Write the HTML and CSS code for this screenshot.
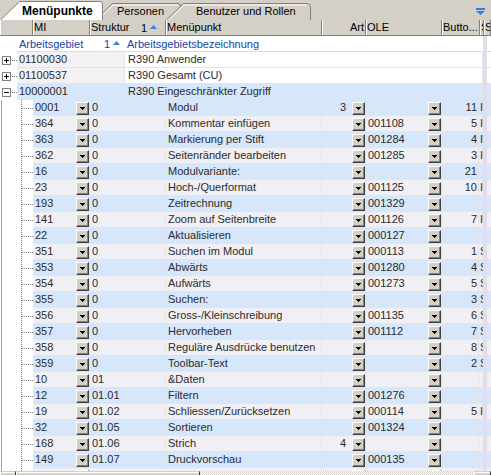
FILE: index.html
```html
<!DOCTYPE html>
<html>
<head>
<meta charset="utf-8">
<link rel="stylesheet" href="styles.css">
</head>
<body>
<div class="app">
  <div class="tabs">
    <div class="tab tab-1">Menüpunkte</div>
    <div class="tab tab-2">Personen</div>
    <div class="tab tab-3">Benutzer und Rollen</div>
    <svg class="filter" width="9" height="7" viewBox="0 0 9 7"><rect x="0" y="0" width="9" height="2" fill="#2f80dc"/><path d="M0 3 H9 L4.5 7 Z" fill="#2f80dc"/></svg>
  </div>
  <div class="hdr">
    <div class="hc"></div>
    <div class="hc">MI</div>
    <div class="hc hc-sort"><span>Struktur</span><span class="sortmark">1<svg width="7" height="4" viewBox="0 0 7 4"><path d="M0 4 L3.5 0 L7 4 Z" fill="#3a84dc"/></svg></span></div>
    <div class="hc">Menüpunkt</div>
    <div class="hc hc-right">Art</div>
    <div class="hc">OLE</div>
    <div class="hc">Butto...</div>
    <div class="hc hc-clip">S</div>
    <div class="hc hc-clip">S</div>
  </div>
  <div class="viewport">
    <div class="row top grp">
      <div class="ttree"></div>
      <div class="c gsort"><span>Arbeitsgebiet</span><span class="sortmark">1<svg width="7" height="4" viewBox="0 0 7 4"><path d="M0 4 L3.5 0 L7 4 Z" fill="#3a84dc"/></svg></span></div>
      <div class="c">Arbeitsgebietsbezeichnung</div>
      <div class="lav"></div>
      <div class="c end"></div>
    </div>
    <div class="row top">
      <div class="ttree"><span class="box"><svg width="7" height="7" viewBox="0 0 7 7"><path d="M1 3.5 H6 M3.5 1 V6" stroke="#000" stroke-width="1"/></svg></span><span class="hline"></span></div>
      <div class="c tmi">01100030</div>
      <div class="c tname">R390 Anwender</div>
      <div class="lav"></div>
      <div class="c end"></div>
    </div>
    <div class="row top">
      <div class="ttree"><span class="box"><svg width="7" height="7" viewBox="0 0 7 7"><path d="M1 3.5 H6 M3.5 1 V6" stroke="#000" stroke-width="1"/></svg></span><span class="hline"></span></div>
      <div class="c tmi">01100537</div>
      <div class="c tname">R390 Gesamt (CU)</div>
      <div class="lav"></div>
      <div class="c end"></div>
    </div>
    <div class="row top open">
      <div class="ttree"><span class="box"><svg width="7" height="7" viewBox="0 0 7 7"><path d="M1 3.5 H6" stroke="#000" stroke-width="1"/></svg></span><span class="hline"></span></div>
      <div class="c tmi">10000001</div>
      <div class="c tname">R390 Eingeschränkter Zugriff</div>
      <div class="lav"></div>
      <div class="c end"></div>
    </div>

    <div class="row child blue"><div class="tree"></div><div class="c mi"><span class="t">0001</span><i class="dd"></i></div><div class="c">0</div><div class="c">Modul</div><div class="c art"><span class="t">3</span><i class="dd"></i></div><div class="c ole"><span class="t"></span><i class="dd"></i></div><div class="c num">11</div><div class="c clip">I</div><div class="lav"></div><div class="c end"></div></div>
    <div class="row child gray"><div class="tree"></div><div class="c mi"><span class="t">364</span><i class="dd"></i></div><div class="c">0</div><div class="c">Kommentar einfügen</div><div class="c art"><span class="t"></span><i class="dd"></i></div><div class="c ole"><span class="t">001108</span><i class="dd"></i></div><div class="c num">5</div><div class="c clip">I</div><div class="lav"></div><div class="c end"></div></div>
    <div class="row child blue"><div class="tree"></div><div class="c mi"><span class="t">363</span><i class="dd"></i></div><div class="c">0</div><div class="c">Markierung per Stift</div><div class="c art"><span class="t"></span><i class="dd"></i></div><div class="c ole"><span class="t">001284</span><i class="dd"></i></div><div class="c num">4</div><div class="c clip">I</div><div class="lav"></div><div class="c end"></div></div>
    <div class="row child gray"><div class="tree"></div><div class="c mi"><span class="t">362</span><i class="dd"></i></div><div class="c">0</div><div class="c">Seitenränder bearbeiten</div><div class="c art"><span class="t"></span><i class="dd"></i></div><div class="c ole"><span class="t">001285</span><i class="dd"></i></div><div class="c num">3</div><div class="c clip">I</div><div class="lav"></div><div class="c end"></div></div>
    <div class="row child blue"><div class="tree"></div><div class="c mi"><span class="t">16</span><i class="dd"></i></div><div class="c">0</div><div class="c">Modulvariante:</div><div class="c art"><span class="t"></span><i class="dd"></i></div><div class="c ole"><span class="t"></span><i class="dd"></i></div><div class="c num">21</div><div class="c clip"></div><div class="lav"></div><div class="c end"></div></div>
    <div class="row child gray"><div class="tree"></div><div class="c mi"><span class="t">23</span><i class="dd"></i></div><div class="c">0</div><div class="c">Hoch-/Querformat</div><div class="c art"><span class="t"></span><i class="dd"></i></div><div class="c ole"><span class="t">001125</span><i class="dd"></i></div><div class="c num">10</div><div class="c clip">I</div><div class="lav"></div><div class="c end"></div></div>
    <div class="row child blue"><div class="tree"></div><div class="c mi"><span class="t">193</span><i class="dd"></i></div><div class="c">0</div><div class="c">Zeitrechnung</div><div class="c art"><span class="t"></span><i class="dd"></i></div><div class="c ole"><span class="t">001329</span><i class="dd"></i></div><div class="c num"></div><div class="c clip"></div><div class="lav"></div><div class="c end"></div></div>
    <div class="row child gray"><div class="tree"></div><div class="c mi"><span class="t">141</span><i class="dd"></i></div><div class="c">0</div><div class="c">Zoom auf Seitenbreite</div><div class="c art"><span class="t"></span><i class="dd"></i></div><div class="c ole"><span class="t">001126</span><i class="dd"></i></div><div class="c num">7</div><div class="c clip">I</div><div class="lav"></div><div class="c end"></div></div>
    <div class="row child blue"><div class="tree"></div><div class="c mi"><span class="t">22</span><i class="dd"></i></div><div class="c">0</div><div class="c">Aktualisieren</div><div class="c art"><span class="t"></span><i class="dd"></i></div><div class="c ole"><span class="t">000127</span><i class="dd"></i></div><div class="c num"></div><div class="c clip"></div><div class="lav"></div><div class="c end"></div></div>
    <div class="row child gray"><div class="tree"></div><div class="c mi"><span class="t">351</span><i class="dd"></i></div><div class="c">0</div><div class="c">Suchen im Modul</div><div class="c art"><span class="t"></span><i class="dd"></i></div><div class="c ole"><span class="t">000113</span><i class="dd"></i></div><div class="c num">1</div><div class="c clip">S</div><div class="lav"></div><div class="c end"></div></div>
    <div class="row child blue"><div class="tree"></div><div class="c mi"><span class="t">353</span><i class="dd"></i></div><div class="c">0</div><div class="c">Abwärts</div><div class="c art"><span class="t"></span><i class="dd"></i></div><div class="c ole"><span class="t">001280</span><i class="dd"></i></div><div class="c num">4</div><div class="c clip">S</div><div class="lav"></div><div class="c end"></div></div>
    <div class="row child gray"><div class="tree"></div><div class="c mi"><span class="t">354</span><i class="dd"></i></div><div class="c">0</div><div class="c">Aufwärts</div><div class="c art"><span class="t"></span><i class="dd"></i></div><div class="c ole"><span class="t">001273</span><i class="dd"></i></div><div class="c num">5</div><div class="c clip">S</div><div class="lav"></div><div class="c end"></div></div>
    <div class="row child blue"><div class="tree"></div><div class="c mi"><span class="t">355</span><i class="dd"></i></div><div class="c">0</div><div class="c">Suchen:</div><div class="c art"><span class="t"></span><i class="dd"></i></div><div class="c ole"><span class="t"></span><i class="dd"></i></div><div class="c num">3</div><div class="c clip">S</div><div class="lav"></div><div class="c end"></div></div>
    <div class="row child gray"><div class="tree"></div><div class="c mi"><span class="t">356</span><i class="dd"></i></div><div class="c">0</div><div class="c">Gross-/Kleinschreibung</div><div class="c art"><span class="t"></span><i class="dd"></i></div><div class="c ole"><span class="t">001135</span><i class="dd"></i></div><div class="c num">6</div><div class="c clip">S</div><div class="lav"></div><div class="c end"></div></div>
    <div class="row child blue"><div class="tree"></div><div class="c mi"><span class="t">357</span><i class="dd"></i></div><div class="c">0</div><div class="c">Hervorheben</div><div class="c art"><span class="t"></span><i class="dd"></i></div><div class="c ole"><span class="t">001112</span><i class="dd"></i></div><div class="c num">7</div><div class="c clip">S</div><div class="lav"></div><div class="c end"></div></div>
    <div class="row child gray"><div class="tree"></div><div class="c mi"><span class="t">358</span><i class="dd"></i></div><div class="c">0</div><div class="c">Reguläre Ausdrücke benutzen</div><div class="c art"><span class="t"></span><i class="dd"></i></div><div class="c ole"><span class="t"></span><i class="dd"></i></div><div class="c num">8</div><div class="c clip">S</div><div class="lav"></div><div class="c end"></div></div>
    <div class="row child blue"><div class="tree"></div><div class="c mi"><span class="t">359</span><i class="dd"></i></div><div class="c">0</div><div class="c">Toolbar-Text</div><div class="c art"><span class="t"></span><i class="dd"></i></div><div class="c ole"><span class="t"></span><i class="dd"></i></div><div class="c num">2</div><div class="c clip">S</div><div class="lav"></div><div class="c end"></div></div>
    <div class="row child gray"><div class="tree"></div><div class="c mi"><span class="t">10</span><i class="dd"></i></div><div class="c">01</div><div class="c">&amp;Daten</div><div class="c art"><span class="t"></span><i class="dd"></i></div><div class="c ole"><span class="t"></span><i class="dd"></i></div><div class="c num"></div><div class="c clip"></div><div class="lav"></div><div class="c end"></div></div>
    <div class="row child blue"><div class="tree"></div><div class="c mi"><span class="t">12</span><i class="dd"></i></div><div class="c">01.01</div><div class="c">Filtern</div><div class="c art"><span class="t"></span><i class="dd"></i></div><div class="c ole"><span class="t">001276</span><i class="dd"></i></div><div class="c num"></div><div class="c clip"></div><div class="lav"></div><div class="c end"></div></div>
    <div class="row child gray"><div class="tree"></div><div class="c mi"><span class="t">19</span><i class="dd"></i></div><div class="c">01.02</div><div class="c">Schliessen/Zurücksetzen</div><div class="c art"><span class="t"></span><i class="dd"></i></div><div class="c ole"><span class="t">000114</span><i class="dd"></i></div><div class="c num">5</div><div class="c clip">I</div><div class="lav"></div><div class="c end"></div></div>
    <div class="row child blue"><div class="tree"></div><div class="c mi"><span class="t">32</span><i class="dd"></i></div><div class="c">01.05</div><div class="c">Sortieren</div><div class="c art"><span class="t"></span><i class="dd"></i></div><div class="c ole"><span class="t">001324</span><i class="dd"></i></div><div class="c num"></div><div class="c clip"></div><div class="lav"></div><div class="c end"></div></div>
    <div class="row child gray"><div class="tree"></div><div class="c mi"><span class="t">168</span><i class="dd"></i></div><div class="c">01.06</div><div class="c">Strich</div><div class="c art"><span class="t">4</span><i class="dd"></i></div><div class="c ole"><span class="t"></span><i class="dd"></i></div><div class="c num"></div><div class="c clip"></div><div class="lav"></div><div class="c end"></div></div>
    <div class="row child blue"><div class="tree"></div><div class="c mi"><span class="t">149</span><i class="dd"></i></div><div class="c">01.07</div><div class="c">Druckvorschau</div><div class="c art"><span class="t"></span><i class="dd"></i></div><div class="c ole"><span class="t">000135</span><i class="dd"></i></div><div class="c num"></div><div class="c clip"></div><div class="lav"></div><div class="c end"></div></div>
    <div class="row child gray"><div class="tree"></div><div class="c mi"><span class="t"></span><i class="dd"></i></div><div class="c"></div><div class="c"></div><div class="c art"><span class="t"></span><i class="dd"></i></div><div class="c ole"><span class="t"></span><i class="dd"></i></div><div class="c num"></div><div class="c clip"></div><div class="lav"></div><div class="c end"></div></div>
  </div>
  <div class="hscroll">
    <div class="sb-btn"></div>
    <div class="sb-thumb"></div>
    <div class="sb-track"></div>
    <div class="sb-btn sb-right"></div>
  </div>
</div>
</body>
</html>
```

FILE: styles.css
```css
* {
  box-sizing: border-box;
  margin: 0;
  padding: 0;
}

html, body {
  width: 491px;
  height: 475px;
  overflow: hidden;
  background: #fff;
}

body {
  font-family: "Liberation Sans", Arial, sans-serif;
  font-size: 11px;
  color: #000;
}

.app {
  width: 491px;
  height: 488px;
  display: flex;
  flex-direction: column;
}

/* ---------- tab strip ---------- */
.tabs {
  height: 20px;
  flex: none;
  display: flex;
  align-items: flex-start;
  background: url("data:image/svg+xml,<svg xmlns='http://www.w3.org/2000/svg' width='491' height='20'><rect width='491' height='20' fill='%23d4d0c8'/><path d='M95.5 20 L112.5 3.5 H178 Q180.5 3.5 180.5 6 V20' fill='%23d4d0c8' stroke='%23808080'/><path d='M97.5 20 L113 5 H178' fill='none' stroke='%23ffffff'/><path d='M166.5 20 L183.5 3.5 H307 Q310.5 3.5 310.5 7 V20' fill='%23d4d0c8' stroke='%23808080'/><path d='M168.5 20 L184 5 H307' fill='none' stroke='%23ffffff'/><path d='M0.5 20 L19.5 1.5 H100 Q102.5 1.5 102.5 4 V20' fill='%23ffffff' stroke='%23808080'/></svg>") no-repeat;
}

.tab {
  height: 20px;
  line-height: 20px;
  padding-top: 1px;
  white-space: nowrap;
  flex: none;
}

.tab-1 {
  width: 102px;
  padding-left: 22px;
  font-weight: bold;
  font-size: 12px;
}

.tab-2 {
  width: 68px;
  padding-left: 15px;
}

.tab-3 {
  width: 140px;
  padding-left: 26px;
}

.filter {
  margin-left: auto;
  margin-right: 6px;
  margin-top: 8px;
  flex: none;
}

/* ---------- column header ---------- */
.hdr {
  height: 16px;
  flex: none;
  display: grid;
  grid-template-columns: 33px 57px 76px 156px 44px 76px 38px 4px 7px;
  background: #d4d0c8;
  border-bottom: 1px solid #808080;
}

.hc {
  border-right: 1px solid #808080;
  box-shadow: inset 1px 0 #fff;
  padding-left: 1px;
  line-height: 14px;
  white-space: nowrap;
  overflow: hidden;
}

.hc-right {
  text-align: right;
  padding-right: 1px;
}

.hc-clip {
  padding-left: 1px;
}

.hc-sort {
  display: flex;
  justify-content: space-between;
  padding-right: 8px;
}

.sortmark {
  display: flex;
  align-items: center;
  gap: 3px;
}

.sortmark svg {
  display: block;
  margin-top: -1px;
}

/* ---------- rows ---------- */
.viewport {
  flex: 1;
  overflow: hidden;
  display: flex;
  flex-direction: column;
}

.row {
  display: grid;
  height: 16px;
  flex: none;
}

.top {
  grid-template-columns: 17px 108px 358px 4px 4px;
}

.child {
  grid-template-columns: 33px 57px 76px 156px 44px 76px 37px 4px 4px 4px;
}

.c {
  height: 16px;
  line-height: 15px;
  border-bottom: 1px solid #e3e3e9;
  border-right: 1px solid #e3e3e9;
  white-space: nowrap;
  overflow: hidden;
  padding-left: 2px;
  color: #2c2c2c;
}

.lav {
  background: #e3dcec;
}

.end {
  border-right: none;
  padding: 0;
}

/* group-by row */
.grp .c {
  color: #15459f;
  line-height: 16px;
  border-bottom-color: #dcdcdc;
  border-right-color: transparent;
}

.gsort {
  display: flex;
  justify-content: space-between;
  padding-right: 4px;
}

/* top level rows */
.ttree {
  display: flex;
  align-items: center;
  padding-left: 2px;
  background: #fff;
}

.box {
  flex: none;
  width: 9px;
  height: 9px;
  border: 1px solid #808080;
  background: #fff;
  display: flex;
}

.box svg {
  display: block;
}

.hline {
  flex: 1;
  height: 0;
  border-top: 1px dotted #808080;
  margin-left: 1px;
}

.tmi {
  background: #f4f1f4;
}

.tname {
  background: #fff;
  padding-left: 3px;
}

.top .end {
  background: #fff;
}

.open .tmi,
.open .tname,
.open .end {
  background: #d6e6fb;
}

/* child rows */
.tree {
  background:
    linear-gradient(#a0a0a0, #a0a0a0) 1px 0 / 1px 100% no-repeat,
    repeating-linear-gradient(to bottom, #808080 0 1px, transparent 1px 2px) 21px 0 / 1px 100% no-repeat,
    repeating-linear-gradient(to right, #808080 0 1px, transparent 1px 2px) 22px 8px / 11px 1px no-repeat,
    #fff;
}

.blue .c {
  background-color: #d6e6fb;
}

.gray .c {
  background-color: #efeff4;
}

.mi,
.art,
.ole {
  display: flex;
}

.mi .t,
.ole .t {
  flex: 1;
  overflow: hidden;
}

.art {
  padding-left: 0;
}

.art .t {
  flex: 1;
  text-align: right;
  padding-right: 6px;
}

.num {
  text-align: right;
  padding-right: 1px;
}

.clip {
  padding-left: 1px;
  border-right: none;
}

.dd {
  flex: none;
  width: 13px;
  height: 13px;
  margin-top: 2px;
  background: #d4d0c8;
  border: 1px solid;
  border-color: #fff #404040 #404040 #fff;
  box-shadow: inset -1px -1px #808080;
  display: flex;
  align-items: center;
  justify-content: center;
}

.dd::after {
  content: "";
  display: block;
  width: 5px;
  height: 3px;
  margin-top: -1px;
  margin-left: -1px;
  background:
    linear-gradient(#000, #000) 0 0 / 5px 1px no-repeat,
    linear-gradient(#000, #000) 1px 1px / 3px 1px no-repeat,
    linear-gradient(#000, #000) 2px 2px / 1px 1px no-repeat;
}

/* ---------- horizontal scrollbar ---------- */
.hscroll {
  height: 17px;
  flex: none;
  display: flex;
}

.sb-btn {
  width: 16px;
  flex: none;
  background: #d4d0c8;
  border-top: 1px solid #d4d0c8;
  border-right: 1px solid #404040;
  box-shadow: inset 0 1px #fff, inset 1px 0 #fff;
}

.sb-right {
  width: 17px;
}

.sb-thumb {
  width: 184px;
  flex: none;
  background: #d4d0c8;
  border-top: 1px solid #d4d0c8;
  border-right: 1px solid #404040;
  box-shadow: inset 0 1px #fff, inset 1px 0 #fff;
}

.sb-track {
  flex: 1;
  background: repeating-conic-gradient(#d4d0c8 0 25%, #fff 0 50%) 0 0 / 2px 2px;
}
```
